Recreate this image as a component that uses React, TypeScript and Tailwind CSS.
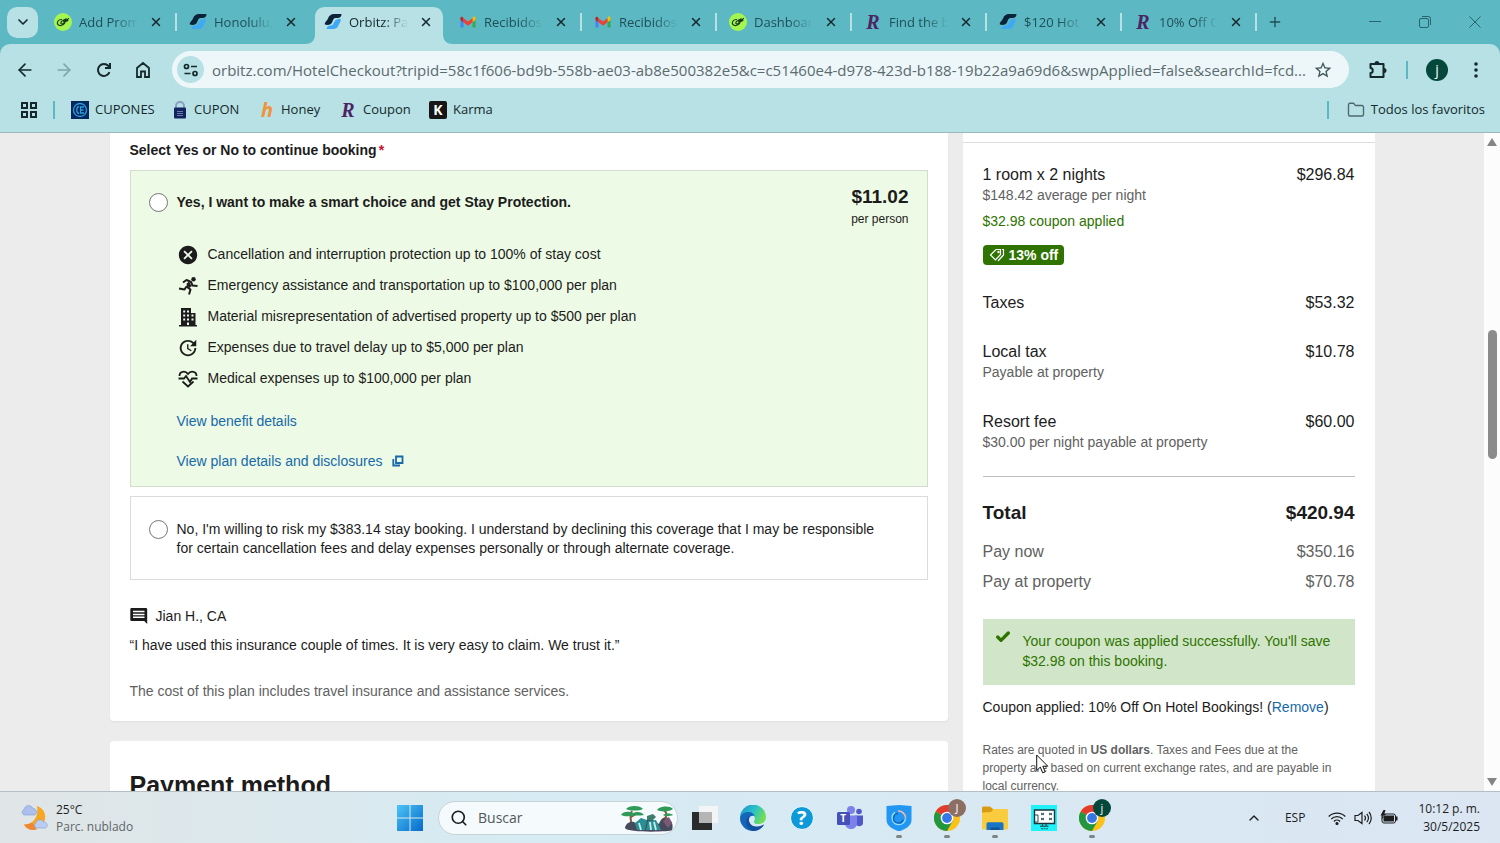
import React, { useState } from 'react';
import { MdCancel, MdStarBorder, MdUpdate } from 'react-icons/md';
import { ArrowLeft, ArrowRight, Check, ChevronDown, ChevronUp, Folder, Plus, Search, X } from 'lucide-react';

type IconName = 'lime' | 'orbitz' | 'gmail' | 'retail';

const tabs: { id: number; icon: IconName; title: string; active?: boolean; noDivider?: boolean }[] = [
  { id: 1, icon: 'lime', title: 'Add Prom' },
  { id: 2, icon: 'orbitz', title: 'Honolulu,', noDivider: true },
  { id: 3, icon: 'orbitz', title: 'Orbitz: Pa', active: true, noDivider: true },
  { id: 4, icon: 'gmail', title: 'Recibidos' },
  { id: 5, icon: 'gmail', title: 'Recibidos' },
  { id: 6, icon: 'lime', title: 'Dashboar' },
  { id: 7, icon: 'retail', title: 'Find the b' },
  { id: 8, icon: 'orbitz', title: '$120 Hot' },
  { id: 9, icon: 'retail', title: '10% Off O' },
];

const LimeIcon = () => (
  <svg viewBox="0 0 18 18" className="size-[18px]">
    <circle cx="9" cy="9" r="9" fill="#a4f550" />
    <path d="M7.500 6.500C4 6.500 2.500 9.500 3.800 11.300c1.300 1.800 5 1.700 6.700-.8 1.300-2-.2-3.500-1.500-3-2 .6-2.800 2.800-1.600 3.400 1.600.7 4.100-2.400 4.600-5.400M10 6.500c1.500 1 3.500.5 4.500-1M9.500 8.200c2 .6 3.700 0 4.500-1" fill="none" stroke="#17391c" strokeWidth="1.200" strokeLinecap="round" />
  </svg>
);

const OrbitzIcon = () => (
  <svg viewBox="0 0 18 18" className="size-[18px]">
    <path d="M.800 11.500C.500 9 3 8 4 5.500 5 2.500 7 1 10 1h7.500c0 2.800-1.500 4-4 4h-1.700C9.500 5 9 7 8 9.500 7 11.500 4.500 12.500.800 11.500z" fill="#0b2338" />
    <path d="M16.500 5.800c.7 3-1 4-2 6.700-.9 2.500-3 3.500-5.500 3.500H2.500c.5-2.200 1.800-3.200 3.800-3.400 3-.3 3.200-2.300 4.200-4.100 1-1.700 3-2.500 6-2.700z" fill="#3fa9f5" />
  </svg>
);

const GmailIcon = () => (
  <svg viewBox="0 0 18 18" className="size-[18px]">
    <path d="M1.500 5v9.500h3V7.200z" fill="#4285f4" />
    <path d="M13.500 7.200v7.300h3V5z" fill="#34a853" />
    <path d="M1.500 5v2l3 2.300V5.500L3.600 4C2.500 3.200 1.500 4 1.500 5z" fill="#c5221f" />
    <path d="M13.500 5.500v3.800l3-2.300V5c0-1.600-1.500-2-2.400-1.200z" fill="#fbbc04" />
    <path d="M4.500 5.200 9 8.600l4.500-3.400v4.100L9 12.700 4.500 9.300z" fill="#ea4335" />
  </svg>
);

const RetailIcon = () => (
  <span className="flex size-[18px] items-center justify-center font-['Liberation_Serif',serif] text-xl leading-none font-bold text-[#4c2465] italic">R</span>
);

const Favicon = ({ name }: { name: IconName }) => {
  if (name === 'lime') return <LimeIcon />;
  if (name === 'orbitz') return <OrbitzIcon />;
  if (name === 'gmail') return <GmailIcon />;
  return <RetailIcon />;
};

const TabStrip = () => (
  <div className="flex h-11 shrink-0 items-center bg-[#5cb8c2] pl-[7px] text-[#1f4f56]">
    <button aria-label="Buscar pestañas" className="mr-1 flex size-[31px] shrink-0 items-center justify-center rounded-[10px] bg-[#b7e1e4] text-[#15292c]">
      <ChevronDown className="size-4" strokeWidth={2.5} />
    </button>
    {tabs.map((tab) => (
      <div key={tab.id} className="relative flex h-11 w-[135px] min-w-0 items-center pl-3">
        {tab.active && (
          <svg viewBox="0 0 148 37" className="absolute bottom-0 -left-[7px] h-[37px] w-[148px]">
            <path d="M0 37c7 0 10-4 10-10V10C10 4 14 0 20 0h108c6 0 10 4 10 10v17c0 6 3 10 10 10z" fill="#b7e1e4" />
          </svg>
        )}
        <span className="relative shrink-0"><Favicon name={tab.icon} /></span>
        <span
          className={`relative ml-[7px] w-[59px] overflow-hidden text-[13px] leading-5 whitespace-nowrap mask-r-from-60% ${tab.active ? 'text-[#15292c]' : ''}`}
        >
          {tab.title}
        </span>
        <button aria-label={`Cerrar ${tab.title}`} className="relative ml-2.5 flex size-4 items-center justify-center text-[#15292c]">
          <X className="size-[14px]" strokeWidth={2.5} />
        </button>
        {!tab.noDivider && <span className="absolute right-0 h-[18px] w-0.5 bg-[#b7e1e4]" />}
      </div>
    ))}
    <button aria-label="Nueva pestaña" className="ml-2.5"><Plus className="size-4" /></button>
    <div className="ml-auto flex items-center text-[#28646b]">
      <button aria-label="Minimizar" className="flex w-[50px] justify-center">
        <svg viewBox="0 0 12 12" className="size-3"><path d="M0 5.500h12" stroke="currentColor" /></svg>
      </button>
      <button aria-label="Restaurar" className="flex w-[50px] justify-center">
        <svg viewBox="0 0 12 12" className="size-3" fill="none" stroke="currentColor">
          <rect x=".5" y="2.500" width="9" height="9" rx="1.500" />
          <path d="M3 .5h6.500a2 2 0 0 1 2 2V9" />
        </svg>
      </button>
      <button aria-label="Cerrar" className="flex w-[50px] justify-center">
        <svg viewBox="0 0 12 12" className="size-3"><path d="m.5.5 11 11m0-11-11 11" stroke="currentColor" /></svg>
      </button>
    </div>
  </div>
);

const Toolbar = () => (
  <div className="shrink-0 bg-[#5cb8c2]">
    <div className="flex h-[51px] items-center rounded-t-[10px] bg-[#b7e1e4] pr-3.5 pl-[15px] text-[#15292c]">
      <button aria-label="Atrás"><ArrowLeft className="size-5" /></button>
      <button aria-label="Adelante" className="ml-[19px] text-[#7fa5a9]"><ArrowRight className="size-5" /></button>
      <button aria-label="Volver a cargar" className="ml-5">
        <svg viewBox="0 0 20 20" className="size-5" fill="none" stroke="currentColor" strokeWidth="2">
          <path d="M15.500 12.200A6 6 0 1 1 14.500 6l1.500 1.500" />
          <path d="M16 3v5h-5" />
        </svg>
      </button>
      <button aria-label="Página principal" className="ml-[19px]">
        <svg viewBox="0 0 20 20" className="size-5" fill="none" stroke="currentColor" strokeWidth="1.800">
          <path d="M4 17V8l6-5 6 5v9h-4v-5.500H8V17z" />
        </svg>
      </button>
      <div className="ml-[19px] flex h-[37px] min-w-0 flex-1 items-center rounded-full bg-[#edf7fa] pr-4 pl-[5px]">
        <button aria-label="Ver información del sitio" className="flex size-[27px] shrink-0 items-center justify-center rounded-full bg-[#b7e1e4]">
          <svg viewBox="0 0 16 16" className="size-4" fill="none" stroke="currentColor" strokeWidth="1.700">
            <circle cx="3.500" cy="4.500" r="2" />
            <path d="M8 4.500h6M1.500 11.500h6" />
            <circle cx="12" cy="11.500" r="2" />
          </svg>
        </button>
        <input
          aria-label="Barra de direcciones y de búsqueda"
          className="ml-2 min-w-0 flex-1 bg-transparent text-[15px] leading-5 text-[#5b6b6e] outline-none"
          defaultValue="orbitz.com/HotelCheckout?tripid=58c1f606-bd9b-558b-ae03-ab8e500382e5&c=c51460e4-d978-423d-b188-19b22a9a69d6&swpApplied=false&searchId=fcd..."
        />
        <button aria-label="Agregar a favoritos" className="ml-1 text-[#40565a]"><MdStarBorder className="size-5" /></button>
      </div>
      <button aria-label="Extensiones" className="ml-[19px]">
        <svg viewBox="0 0 20 20" className="size-5">
          <path d="M2.500 4h13v13h-13v-4c3 0 3-5 0-5z" fill="none" stroke="currentColor" strokeWidth="2" strokeLinejoin="round" />
          <path d="M6.500 3.500a2.500 2.500 0 0 1 5 0zM16 8a2.500 2.500 0 0 1 0 5z" fill="currentColor" />
        </svg>
      </button>
      <span className="ml-[18px] h-[18px] w-0.5 bg-[#5cb8c2]" />
      <button aria-label="Perfil" className="ml-[18px] flex size-[22px] items-center justify-center rounded-full bg-[#04483c] text-sm leading-none text-white">j</button>
      <button aria-label="Menú" className="ml-[18px]">
        <svg viewBox="0 0 20 20" className="size-5" fill="currentColor">
          <circle cx="10" cy="4" r="1.800" /><circle cx="10" cy="10" r="1.800" /><circle cx="10" cy="16" r="1.800" />
        </svg>
      </button>
    </div>
  </div>
);

const bookmarks = [
  {
    label: 'CUPONES',
    width: 'w-[101px]',
    icon: (
      <svg viewBox="0 0 18 18" className="size-[18px]" fill="none">
        <path d="M0 0h18v18H0z" fill="#06265c" />
        <circle cx="9" cy="9" r="6.500" stroke="#2a9fdc" strokeWidth="1.300" />
        <path d="M8 5.500c-3 .5-3 6.500 0 7M13 6H9.500v6H13M9.500 9h3" stroke="#2a9fdc" strokeWidth="1.300" />
      </svg>
    ),
  },
  {
    label: 'CUPON',
    width: 'w-[87px]',
    icon: (
      <svg viewBox="0 0 14 18" className="h-[18px] w-4">
        <path d="M3 8V5a4 4 0 0 1 8 0v3" fill="none" stroke="#8b9dc4" strokeWidth="2" />
        <rect x="1" y="6.500" width="12" height="11" rx="1" fill="#12235f" />
        <path d="M4 10.500h6M4 12.500h6M4 14.500h6" stroke="#8591bd" strokeWidth=".8" />
      </svg>
    ),
  },
  {
    label: 'Honey',
    width: 'w-20',
    icon: <span className="flex h-[18px] w-4 items-center justify-center text-xl leading-none font-bold text-[#f3933a] italic">h</span>,
  },
  { label: 'Coupon', width: 'w-[90px]', icon: <RetailIcon /> },
  {
    label: 'Karma',
    width: 'w-[70px]',
    icon: <span className="flex size-[18px] items-center justify-center rounded-xs bg-[#171515] text-sm leading-none font-bold text-white">K</span>,
  },
];

const BookmarksBar = () => (
  <nav className="flex h-[38px] shrink-0 items-center border-b border-[#97babd] bg-[#b7e1e4] pr-[15px] pb-[7px] pl-5 text-[13px] text-[#15292c]">
    <button aria-label="Aplicaciones">
      <svg viewBox="0 0 18 18" className="size-[18px]" fill="none" stroke="currentColor" strokeWidth="2">
        <path d="M2 2h5v5H2zM11 2h5v5h-5zM2 11h5v5H2zM11 11h5v5h-5z" />
      </svg>
    </button>
    <span className="mr-4 ml-[15px] h-[18px] w-0.5 bg-[#5cb8c2]" />
    {bookmarks.map((item) => (
      <a key={item.label} href="#" className={`flex items-center gap-1.5 whitespace-nowrap ${item.width}`}>
        <span className="shrink-0">{item.icon}</span>
        {item.label}
      </a>
    ))}
    <span className="mr-[18px] ml-auto h-[18px] w-0.5 bg-[#5cb8c2]" />
    <a href="#" className="flex items-center gap-1.5 whitespace-nowrap">
      <Folder className="size-[18px] text-[#4d686c]" strokeWidth={1.8} />
      Todos los favoritos
    </a>
  </nav>
);

const RunnerIcon = () => (
  <svg viewBox="0 0 20 20" className="size-5" fill="none" stroke="currentColor" strokeWidth="2" strokeLinejoin="round">
    <circle cx="15.500" cy="3.200" r="2.200" fill="currentColor" stroke="none" />
    <path d="M5 6.500 8.500 4l4.500 2 1.500 3.500 5 .5" />
    <path d="M11.500 6.500 9 11l3.500 2.500L11 18.500" />
    <path d="M8.500 10.500 6.500 13.500 1 12.500" />
    <path d="m9.500 7 3 4" strokeWidth="3" />
  </svg>
);

const BuildingIcon = () => (
  <svg viewBox="0 0 20 20" className="size-5">
    <path fillRule="evenodd" d="M3 1h10v5h4.500v12H19v1.500H1V18h2zM5.200 3.500v2h2v-2zm3.800 0v2h2v-2zM5.200 7.500v2h2v-2zm3.800 0v2h2v-2zm4.500 0v2h2v-2zM5.200 11.500v2h2v-2zm3.800 0v2h2v-2zm4.500 0v2h2v-2zM9 15.500V18h2v-2.500z" fill="currentColor" />
  </svg>
);

const HeartPulseIcon = () => (
  <svg viewBox="0 0 20 20" className="size-5" fill="none" stroke="currentColor" strokeWidth="1.800">
    <path d="M1.500 7C1.500 2 7.500 1.500 10 5c2.500-3.500 8.500-3 8.500 2M4.500 12.500 10 17.500l5.500-5" />
    <path d="M.5 9.500H6L8 7l4 6 2-3.500h5.500" />
  </svg>
);

const CommentIcon = () => (
  <svg viewBox="0 0 18 18" className="size-[18px]">
    <path fillRule="evenodd" d="M1.500 1h14.500a1.200 1.200 0 0 1 1.200 1.200V17l-3-3H1.500A1.200 1.200 0 0 1 .3 12.800V2.200A1.200 1.200 0 0 1 1.500 1zM3 3.800v1.500h11.500V3.800zm0 2.900v1.500h11.500V6.700zm0 2.900v1.500h11.500V9.600z" fill="currentColor" />
  </svg>
);

const benefits = [
  { icon: <MdCancel className="size-[22px]" />, text: 'Cancellation and interruption protection up to 100% of stay cost' },
  { icon: <RunnerIcon />, text: 'Emergency assistance and transportation up to $100,000 per plan' },
  { icon: <BuildingIcon />, text: 'Material misrepresentation of advertised property up to $500 per plan' },
  { icon: <MdUpdate className="size-[22px]" />, text: 'Expenses due to travel delay up to $5,000 per plan' },
  { icon: <HeartPulseIcon />, text: 'Medical expenses up to $100,000 per plan' },
];

const radioClass = 'size-[19px] shrink-0 appearance-none rounded-full border border-[#767676] bg-white checked:border-[6px] checked:border-[#1769aa]';

const ProtectionForm = () => {
  const [choice, setChoice] = useState('');

  return (
    <div className="min-w-0 flex-1 text-sm leading-5 text-[#1c1c1c]">
      <section className="rounded-b bg-white px-5 pt-[7px] pb-5 shadow-xs">
        <h2 className="font-bold">
          Select Yes or No to continue booking<span className="ml-0.5 text-[#c8102e]">*</span>
        </h2>

        <div className="mt-2.5 border border-[#d3dccd] bg-[#edfae5] px-[18px] pt-4 pb-[15px]">
          <div className="flex items-start justify-between">
            <div className="flex items-center gap-[9px] pt-[5px]">
              <input id="protection-yes" type="radio" name="protection" className={radioClass} checked={choice === 'yes'} onChange={() => setChoice('yes')} />
              <label htmlFor="protection-yes" className="font-bold">Yes, I want to make a smart choice and get Stay Protection.</label>
            </div>
            <div className="text-right">
              <div className="text-[19px] leading-5 font-bold">$11.02</div>
              <div className="mt-1 text-xs leading-4">per person</div>
            </div>
          </div>
          <ul className="mt-[11px] ml-7">
            {benefits.map((benefit) => (
              <li key={benefit.text} className="flex h-[31px] items-center gap-[9px]">
                <span className="flex w-[22px] justify-center pt-[3px]">{benefit.icon}</span>
                {benefit.text}
              </li>
            ))}
          </ul>
          <div className="mt-[18px] ml-7 flex flex-col items-start gap-5 text-[#1769aa]">
            <a href="#">View benefit details</a>
            <a href="#" className="flex items-center gap-2.5">
              View plan details and disclosures
              <svg viewBox="0 0 12 12" className="size-3" fill="none" stroke="currentColor" strokeWidth="1.800">
                <path d="M4 1.500h6.500V8H4zM1.300 4v6.500H8" />
              </svg>
            </a>
          </div>
        </div>

        <div className="mt-[9px] flex items-start gap-[9px] border border-[#dcdcdc] pt-[23px] pr-9 pb-[21px] pl-[18px]">
          <input id="protection-no" type="radio" name="protection" className={radioClass} checked={choice === 'no'} onChange={() => setChoice('no')} />
          <label htmlFor="protection-no" className="leading-[19px]">
            No, I'm willing to risk my $383.14 stay booking. I understand by declining this coverage that I may be responsible for certain cancellation fees and delay expenses personally or through alternate coverage.
          </label>
        </div>

        <div className="mt-[26px] flex items-center gap-2">
          <CommentIcon />
          Jian H., CA
        </div>
        <p className="mt-[9px]">“I have used this insurance couple of times. It is very easy to claim. We trust it.”</p>
        <p className="mt-[26px] text-[#616161]">The cost of this plan includes travel insurance and assistance services.</p>
      </section>

      <section className="mt-5 rounded-t bg-white px-5 pt-7 pb-10">
        <h2 className="text-[25px] leading-8 font-bold">Payment method</h2>
      </section>
    </div>
  );
};

const PriceRow = ({ label, amount, note }: { label: string; amount: string; note?: string }) => (
  <div>
    <div className="flex justify-between text-base leading-5 text-[#1c1c1c]">
      <span>{label}</span>
      <span>{amount}</span>
    </div>
    {note && <div className="leading-[21px]">{note}</div>}
  </div>
);

const PriceSummary = () => (
  <aside className="w-[412px] shrink-0 bg-white text-sm text-[#616161]">
    <div className="h-[10px] border-b border-[#dcdcdc]" />
    <div className="px-5 pt-[22px] pb-10">
      <PriceRow label="1 room x 2 nights" amount="$296.84" note="$148.42 average per night" />
      <div className="mt-[5px] leading-5 text-[#2f7300]">$32.98 coupon applied</div>
      <div className="mt-3.5 flex h-5 w-fit items-center gap-1 rounded bg-[#2f7300] px-1.5 leading-5 font-bold text-white">
        <svg viewBox="0 0 16 16" className="size-4" fill="none" stroke="currentColor" strokeWidth="1.200">
          <path d="M1.500 8 7 2.500h4.500v5L6.500 13z" />
          <path d="M13 2.500h1.500V8L9 14" />
          <circle cx="9.500" cy="5" r=".6" fill="currentColor" />
        </svg>
        13% off
      </div>

      <div className="mt-7 flex flex-col gap-[29px]">
        <PriceRow label="Taxes" amount="$53.32" />
        <PriceRow label="Local tax" amount="$10.78" note="Payable at property" />
        <PriceRow label="Resort fee" amount="$60.00" note="$30.00 per night payable at property" />
      </div>

      <div className="mt-[23px] border-t border-[#bdbdbd] pt-[26px]">
        <div className="flex justify-between text-[19px] leading-5 font-bold text-[#1c1c1c]">
          <span>Total</span>
          <span>$420.94</span>
        </div>
        <div className="mt-3.5 flex justify-between text-base leading-[30px]">
          <span>Pay now</span>
          <span>$350.16</span>
        </div>
        <div className="flex justify-between text-base leading-[30px]">
          <span>Pay at property</span>
          <span>$70.78</span>
        </div>
      </div>

      <div className="mt-[22px] flex gap-3 bg-[#d1e6c8] px-3 pt-3 pb-3.5 leading-5 text-[#2f7300]">
        <Check className="-mt-0.5 size-4 shrink-0" strokeWidth={5} />
        <p>Your coupon was applied successfully. You'll save $32.98 on this booking.</p>
      </div>
      <p className="mt-3 leading-5 text-[#1c1c1c]">
        Coupon applied: 10% Off On Hotel Bookings! (<a href="#" className="text-[#1769aa]">Remove</a>)
      </p>
      <p className="mt-6 pr-3 text-xs leading-[18px]">
        Rates are quoted in <b>US dollars</b>. Taxes and Fees due at the property are based on current exchange rates, and are payable in local currency.
      </p>
    </div>
  </aside>
);

const Scrollbar = () => (
  <div className="flex w-4 shrink-0 flex-col items-center bg-[#fcfcfc] py-[5px] text-[#858585]">
    <svg viewBox="0 0 10 8" className="h-2 w-2.5"><path d="M5 0l5 8H0z" fill="currentColor" /></svg>
    <div className="mt-[184px] h-[129px] w-[9px] rounded-full bg-[#8b8b8b]" />
    <svg viewBox="0 0 10 8" className="mt-auto h-2 w-2.5"><path d="M5 8l5-8H0z" fill="currentColor" /></svg>
  </div>
);

const ChromeLogo = ({ badge, color }: { badge: string; color: string }) => (
  <span className="relative">
    <svg viewBox="0 0 26 26" className="size-[26px]">
      <circle cx="13" cy="13" r="13" fill="#fbc116" />
      <path d="M13 13 1.740 6.500A13 13 0 0 1 24.260 6.500z" fill="#e33b2e" />
      <path d="M1.740 6.500A13 13 0 0 0 13 26l5.600-9.800L13 13z" fill="#23973f" />
      <path d="M13 7h11.500l-.3-.6A13 13 0 0 0 13 0z" fill="#e33b2e" />
      <circle cx="13" cy="13" r="6.300" fill="#fff" />
      <circle cx="13" cy="13" r="4.900" fill="#3578e5" />
    </svg>
    <span className={`absolute -top-[6px] -right-[6px] flex size-[18px] items-center justify-center rounded-full text-[11px] leading-none text-white ${color}`}>{badge}</span>
  </span>
);

const apps = [
  {
    name: 'Vista de tareas',
    icon: (
      <svg viewBox="0 0 26 26" className="size-[26px]">
        <path d="M0 7h20v18H0z" fill="#2b2b2b" />
        <path d="M7 1h19v17H7z" fill="#f5f5f5" fillOpacity=".9" />
        <path d="M7 7h13v11H7z" fill="#b5b5b5" />
      </svg>
    ),
  },
  {
    name: 'Microsoft Edge',
    icon: (
      <svg viewBox="0 0 26 26" className="size-[26px]">
        <defs>
          <linearGradient id="edgeTop" x1="0" y1="0" x2="1" y2=".4">
            <stop offset="0" stopColor="#1b8fd6" /><stop offset=".6" stopColor="#2cc3c5" /><stop offset="1" stopColor="#6fdd58" />
          </linearGradient>
        </defs>
        <path d="M0 13A13 13 0 0 1 26 12c0 5-4 7-8 7-3 0-4.500-1.500-4-2.500 1-1.500 1.500-4-.5-6C10 8 3 8 0 13z" fill="url(#edgeTop)" />
        <path d="M0 13c1-4 4.500-6 8-6 3 0 6 1.500 6.500 4-4-1.500-6 2-5.500 5 .5 4 5 7 11 5.500 1.500-.4 3-1.500 4-2C21 24 17 26 13 26A13 13 0 0 1 0 13z" fill="#1466b8" />
        <path d="M9 11c-5 4-3 13 4 15 5 0 9-2.500 11-6.500-7 4-14 2-15-3.500z" fill="#124f9e" />
      </svg>
    ),
  },
  {
    name: 'Ayuda',
    icon: (
      <span className="flex size-6 items-center justify-center rounded-full border border-white bg-[#0e9ad8] text-xl leading-none font-bold text-white">?</span>
    ),
  },
  {
    name: 'Teams',
    icon: (
      <span className="relative">
        <svg viewBox="0 0 26 26" className="size-[26px]">
          <circle cx="14" cy="5" r="4" fill="#7b83eb" />
          <circle cx="22" cy="6.500" r="2.800" fill="#5059c9" />
          <path d="M18 10.500h8v7.500c0 4-6 4-8 1z" fill="#5059c9" />
          <path d="M8 10.500h12V18c0 8-12 8-12 0z" fill="#7b83eb" />
          <rect y="7" width="13" height="13" rx="1.500" fill="#4650ba" />
        </svg>
        <span className="absolute top-[8px] left-[3px] text-[10px] leading-none font-bold text-white">T</span>
      </span>
    ),
  },
  {
    name: 'Hotspot Shield',
    open: true,
    icon: (
      <svg viewBox="0 0 26 26" className="size-[26px]" fill="none">
        <path d="M.5 1 13 0l12.500 1v14c0 6-6 9-12.500 11.500C6.500 24 .5 21 .5 15z" fill="#2196f3" />
        <path d="M12 6A7 7 0 0 1 19.500 13" stroke="#f5b8a8" strokeWidth="1.600" />
        <path d="M9 7.500C4 11 6 19.500 13 19.500a6.500 6.500 0 0 0 6.500-6" stroke="#8fe0f7" strokeWidth="1.600" />
        <path d="M12 8.500a4.800 4.800 0 1 0 5 6" stroke="#1565c0" strokeWidth="1.500" />
      </svg>
    ),
  },
  { name: 'Chrome J', open: true, icon: <ChromeLogo badge="J" color="bg-[#8d6e63]" /> },
  {
    name: 'Explorador de archivos',
    open: true,
    icon: (
      <svg viewBox="0 0 26 26" className="size-[26px]">
        <path d="M0 3c0-1 .5-1.500 1.500-1.500H8L11 4v4H0z" fill="#d89b12" />
        <path d="M0 7.500 9 7l2.500-3H24.500C25.500 4 26 4.500 26 5.500V23c0 1-.5 1.500-1.500 1.500h-23C.5 24.500 0 24 0 23z" fill="#fbcb3e" />
        <path d="M4.500 25v-6c0-1 .7-1.700 1.700-1.700h13.600c1 0 1.700.7 1.700 1.700v6z" fill="#1975c5" />
        <path d="M8.500 25v-2.500h9V25z" fill="#0f5596" />
      </svg>
    ),
  },
  {
    name: 'Grabador de pantalla',
    icon: (
      <svg viewBox="0 0 26 26" className="size-[26px]" fill="none">
        <path d="M0 0h26v26H0z" fill="#1ff2f8" />
        <path d="M3.500 5h20v13.500h-20z" fill="#fff" stroke="#17363c" strokeWidth="1.400" />
        <path d="m10 8 3 2m-3 0 3-2m5 0 3 2m-3 0 3-2m-11 5 3 2m-3 0 3-2m5 0 3 2m-3 0 3-2M3.500 10H7v7H3.500z" stroke="#17363c" strokeWidth=".9" />
        <path d="M11.500 19v1.800M15 19v1.800M9 21.200h8.500" stroke="#17363c" />
        <path d="M10 23.700h7" stroke="#0b7f86" strokeWidth="1.200" strokeDasharray="2 .6" />
      </svg>
    ),
  },
  { name: 'Chrome j', open: true, icon: <ChromeLogo badge="j" color="bg-[#04483c]" /> },
];

const Weather = () => (
  <button className="flex items-center gap-[7px] pl-[21px] text-left text-xs leading-[17px]">
    <svg viewBox="0 0 28 28" className="size-7">
      <path d="M16 2c6 2 9 7 8 13-1 7-9 11-17 9-2-.5-3-2-4-3.500C11 21 18 14 16 2z" fill="#f6a723" />
      <path d="M3 20.500c3 0 6-.5 8-2l5 7c-6 1.500-11-.5-13-5z" fill="#ef8630" />
      <path d="M3 11a3 3 0 0 1 0-5.500C4 1 10 0 12 4.500c4 0 5 5 1.500 6.500z" fill="#abc0ec" stroke="#7f9cd8" strokeWidth=".6" />
      <path d="M15 24a3 3 0 0 1 0-5.200c1.500-4 6-4 7.500-.8 4 0 5 4.500 2 6z" fill="#bccdf3" stroke="#7f9cd8" strokeWidth=".6" />
    </svg>
    <span>
      <span className="block">25°C</span>
      <span className="block whitespace-nowrap text-[#5e6668]">Parc. nublado</span>
    </span>
  </button>
);

const Bonsai = () => (
  <svg viewBox="0 0 52 28" className="h-7 w-[52px]">
    <path d="M4 24c1-5 5-7 9-6l6 4 5-6h8l6 4c2-7 8-9 11-4 3 3 3 7 2 10-1 2-45 3-47-2z" fill="#454a5c" />
    <path d="M14 19l6-5 6 2-2 10h-8zM27 17l8-1 5 10H25z" fill="#2a8f93" />
    <path d="M18 19l2 7M29 18l1 8M33 18l2 8" stroke="#c5eeee" strokeWidth="1.800" />
    <path d="M10 18c0-5-2-6 1-11M10 13l5-3M44 15c2-4 2-6-1-9" stroke="#8a5a35" strokeWidth="2" fill="none" />
    <path d="M0 11c2-4 8-4 12-2 4-2 9-1 11 2-5 1-8 0-11 1-4 0-8 1-12-1zM5 5c3-4 14-4 17 0-4 2-13 2-17 0zM36 6c2-4 13-5 16-1-3 3-13 3-16 1zM42 11c2-2 8-2 10 0-3 1-7 2-10 0z" fill="#2f9a57" />
    <path d="M42 17l6-4 3 6-4 5z" fill="#7c5a76" />
    <path d="M26 12l6-2 3 3-3 3h-6z" fill="#3c7d6c" />
  </svg>
);

const Taskbar = () => (
  <footer className="grid h-[52px] shrink-0 grid-cols-[1fr_auto_1fr] items-stretch border-t border-[#b3bfc3] bg-linear-to-r from-[#e0e5e6] via-[#d6ebf3] via-35% to-[#dbe6f2] text-[#1b1d1e]">
    <Weather />
    <div className="flex items-center pl-0.5">
      <button aria-label="Inicio" className="mr-1 flex w-12 justify-center">
        <svg viewBox="0 0 26 26" className="size-[26px]">
          <defs>
            <linearGradient id="win" x1="0" y1="0" x2="1" y2="1">
              <stop offset="0" stopColor="#4cc4f7" /><stop offset="1" stopColor="#0669c9" />
            </linearGradient>
          </defs>
          <path d="M0 0h12.500v12.500H0zM13.500 0H26v12.500H13.500zM0 13.500h12.500V26H0zM13.500 13.500H26V26H13.500z" fill="url(#win)" />
        </svg>
      </button>
      <div className="mr-[3px] flex h-[34px] w-60 items-center rounded-full border border-[#c5d3d9] bg-[#f5fafc] pr-1 pl-[11px]">
        <Search className="size-[18px] shrink-0" strokeWidth={2.2} />
        <input aria-label="Buscar" placeholder="Buscar" className="ml-2.5 w-0 min-w-0 flex-1 bg-transparent text-sm outline-none placeholder:text-[#51585b]" />
        <Bonsai />
      </div>
      <div className="flex w-[435px] justify-between">
        {apps.map((app) => (
          <button key={app.name} aria-label={app.name} className="relative flex h-[51px] w-12 items-center justify-center">
            {app.icon}
            {app.open && <span className="absolute bottom-[5px] h-[3px] w-1.5 rounded-full bg-[#7d8487]" />}
          </button>
        ))}
      </div>
    </div>
    <div className="flex items-center justify-end pr-5 text-xs">
      <button aria-label="Mostrar iconos ocultos"><ChevronUp className="size-4" /></button>
      <button className="ml-[23px]">ESP</button>
      <button aria-label="Red, volumen y batería" className="ml-[23px] flex items-center gap-2">
        <svg viewBox="0 0 18 16" className="h-4 w-[18px]" fill="none" stroke="currentColor" strokeWidth="1.200">
          <path d="M.7 6.500a11.700 11.700 0 0 1 16.600 0M3.300 9a8 8 0 0 1 11.400 0M5.900 11.500a4.400 4.400 0 0 1 6.200 0" />
          <circle cx="9" cy="13.500" r="1" fill="currentColor" />
        </svg>
        <svg viewBox="0 0 18 16" className="h-4 w-[18px]" fill="none" stroke="currentColor" strokeWidth="1.200">
          <path d="M1 5.500h3L8 2.500v11l-4-3H1zM10.500 5.500c1.200 1.500 1.200 3.500 0 5M12.800 3.800c2 2.500 2 5.900 0 8.400M15 2c3 3.500 3 8.500 0 12" />
        </svg>
        <svg viewBox="0 0 18 16" className="h-4 w-[18px]">
          <rect x="2" y="4" width="13.500" height="9" rx="2" fill="none" stroke="currentColor" />
          <path d="M3.500 5.500H14v6H3.500zM16 6.500h1.500v4H16zM3.500 0 .5 5.500h2l-1 4L6 4H4.300L5.500 0z" fill="currentColor" />
        </svg>
      </button>
      <div className="ml-5 text-right leading-[18px] whitespace-nowrap">
        <div>10:12 p. m.</div>
        <div>30/5/2025</div>
      </div>
    </div>
  </footer>
);

export default function App() {
  return (
    <div className="relative flex h-screen flex-col overflow-hidden font-['Open_Sans',sans-serif]">
      <TabStrip />
      <Toolbar />
      <BookmarksBar />
      <div className="flex min-h-0 flex-1 font-['Liberation_Sans',sans-serif]">
        <main className="min-w-0 flex-1 overflow-hidden bg-[#ececec]">
          <div className="mx-auto flex max-w-[1265px] gap-[15px]">
            <ProtectionForm />
            <PriceSummary />
          </div>
        </main>
        <Scrollbar />
      </div>
      <Taskbar />
      {/* mouse pointer */}
      <svg viewBox="0 0 13 20" className="pointer-events-none absolute top-[754px] left-[1036px] h-5 w-[13px]">
        <path d="M.7 1v15.500l3.600-3.400 2.400 5.700 2.500-1-2.400-5.600h5z" fill="#fff" stroke="#111" />
      </svg>
    </div>
  );
}
